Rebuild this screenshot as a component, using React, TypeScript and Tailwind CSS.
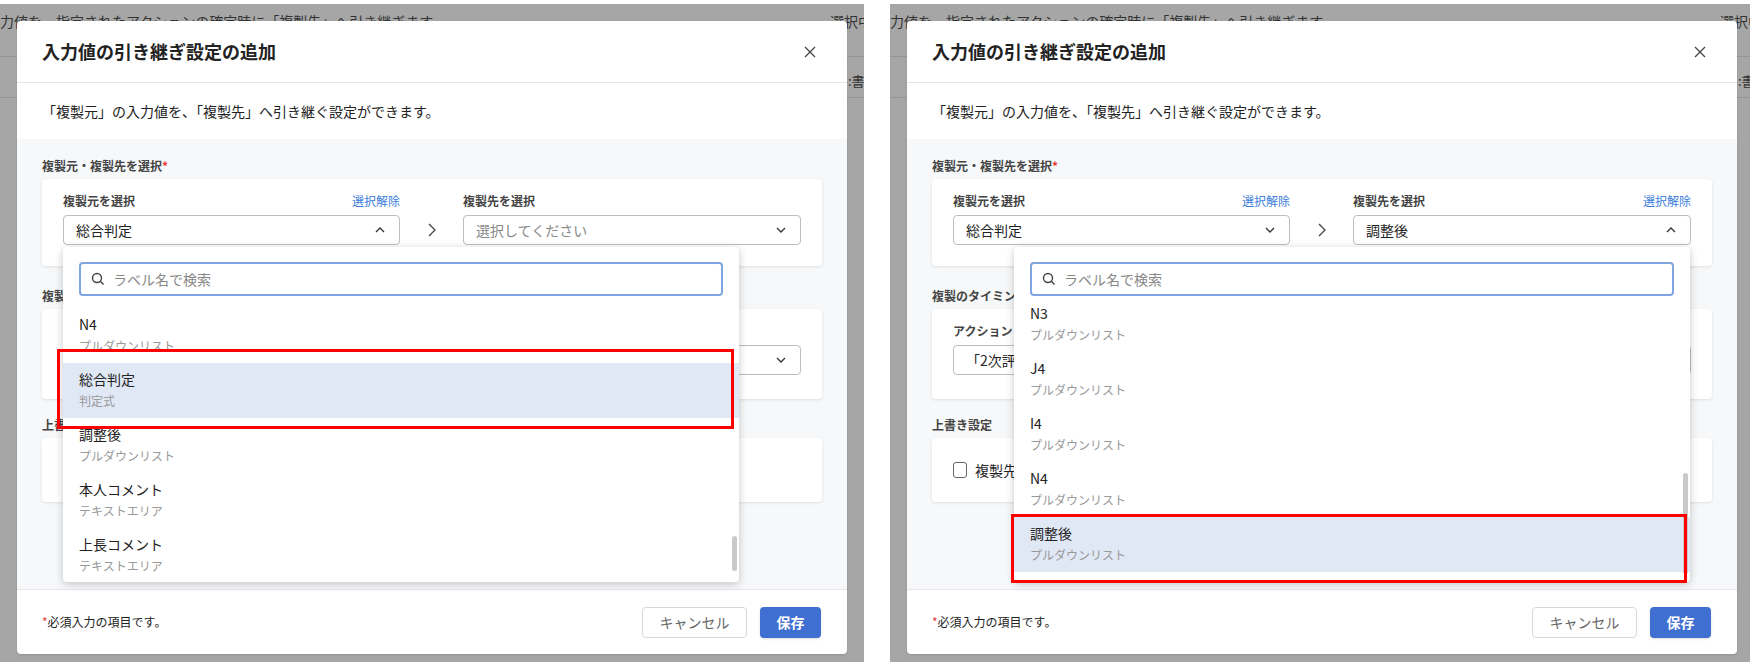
import React from "react";

const font = { fontFamily: '"Noto Sans CJK JP", "Noto Sans", sans-serif' };

const Chevron = ({ up }: { up?: boolean }) => (
  <svg width="14" height="14" viewBox="0 0 14 14" fill="none" stroke="#333" strokeWidth="1.3">
    {up ? <path d="M3 9l4-4 4 4" /> : <path d="M3 5l4 4 4-4" />}
  </svg>
);

const Select = ({ text, placeholder, up }: { text: string; placeholder?: boolean; up?: boolean }) => (
  <div className="h-[30px] border border-[#b9bdc4] rounded-[4px] bg-white flex items-center justify-between px-[12px]">
    <span className={`text-[14px] ${placeholder ? "text-[#888]" : "text-[#222]"}`}>{text}</span>
    <Chevron up={up} />
  </div>
);

type Item = { t: string; s: string; hl?: boolean };

const Dropdown = ({ left, items, offset, bar }: { left: number; items: Item[]; offset: number; bar: [number, number] }) => (
  <div
    className="absolute top-[243px] w-[676px] h-[335px] bg-white rounded-[4px] shadow-[0_2px_8px_rgba(0,0,0,0.22)] overflow-hidden"
    style={{ left }}
  >
    <div className="px-[16px] pt-[15px]">
      <div className="h-[34px] border-2 border-[#7fa6e0] rounded-[4px] flex items-center px-[10px] gap-[8px]">
        <svg width="14" height="14" viewBox="0 0 14 14" fill="none" stroke="#444" strokeWidth="1.4">
          <circle cx="6" cy="6" r="4.5" />
          <path d="M9.3 9.3l3.2 3.2" />
        </svg>
        <span className="text-[14px] text-[#888]">ラベル名で検索</span>
      </div>
    </div>
    <div className="h-[281px] overflow-hidden mt-[5px]">
      <div style={{ marginTop: offset }}>
        {items.map((it, i) => (
          <div key={i} className={`h-[55px] pl-[16px] pt-[6px] ${it.hl ? "bg-[#e0e7f5]" : ""}`}>
            <div className="text-[14px] text-[#222] leading-[20px]">{it.t}</div>
            <div className="text-[12px] text-[#999] leading-[16px] mt-[4px]">{it.s}</div>
          </div>
        ))}
      </div>
    </div>
    <div className="absolute right-[2px] w-[5px] rounded-full bg-[#c9c9c9]" style={{ top: bar[0], height: bar[1] }} />
  </div>
);

const Panel = ({ right }: { right?: boolean }) => (
  <div className={`relative h-[658px] mt-[4px] bg-[#a6a6a6] overflow-hidden ${right ? "w-[860px]" : "w-[864px]"}`}>
    <div className="absolute top-[7px] left-0 text-[14px] text-[#333] whitespace-nowrap">力値を、指定されたアクションの確定時に「複製先」へ引き継ぎます。</div>
    <div className="absolute top-[7px] left-[830px] text-[14px] text-[#333] whitespace-nowrap">選択中</div>
    <div className="absolute top-[67px] left-[848px] text-[13px] text-[#333] whitespace-nowrap">:書</div>
    <div className="absolute top-[52px] left-0 right-0 h-px bg-[#959595]" />
    <div className="absolute top-[93px] left-0 right-0 h-px bg-[#959595]" />

    <div className="absolute left-[17px] top-[17px] w-[830px] bg-white rounded-[4px] flex flex-col shadow">
      <div className="h-[62px] flex items-center justify-between pl-[25px] pr-[30px] border-b border-[#e6e7ea]">
        <span className="text-[18px] font-bold text-[#222]">入力値の引き継ぎ設定の追加</span>
        <svg width="14" height="14" viewBox="0 0 14 14" stroke="#444" strokeWidth="1.3">
          <path d="M2 2l10 10M12 2L2 12" />
        </svg>
      </div>
      <div className="h-[56px] flex items-center px-[25px] text-[14px] text-[#222]">
        「複製元」の入力値を、「複製先」へ引き継ぐ設定ができます。
      </div>
      <div className="h-[450px] bg-[#f7f8fa] px-[25px] pt-[19px]">
        <div className="text-[12px] font-semibold text-[#444] leading-[16px]">
          複製元・複製先を選択<span className="text-[#e53935]">*</span>
        </div>
        <div className="mt-[5px] bg-white rounded-[4px] shadow-[0_1px_3px_rgba(0,0,0,0.1)] px-[21px] pt-[14px] pb-[21px] flex items-end">
          <div className="w-[337px]">
            <div className="flex justify-between text-[12px] mb-[6px] leading-[16px]">
              <span className="font-semibold text-[#444]">複製元を選択</span>
              <span className="text-[#3b7ddd]">選択解除</span>
            </div>
            <Select text="総合判定" up={!right} />
          </div>
          <div className="w-[63px] h-[30px] flex items-center justify-center">
            <svg width="12" height="16" viewBox="0 0 12 16" fill="none" stroke="#444" strokeWidth="1.3">
              <path d="M3 2l6 6-6 6" />
            </svg>
          </div>
          <div className="w-[338px]">
            <div className="flex justify-between text-[12px] mb-[6px] leading-[16px]">
              <span className="font-semibold text-[#444]">複製先を選択</span>
              {right && <span className="text-[#3b7ddd]">選択解除</span>}
            </div>
            {right ? <Select text="調整後" up /> : <Select text="選択してください" placeholder />}
          </div>
        </div>
        <div className="mt-[22px] text-[12px] font-semibold text-[#444] leading-[16px]">複製のタイミング</div>
        <div className="mt-[5px] h-[90px] bg-white rounded-[4px] shadow-[0_1px_3px_rgba(0,0,0,0.1)] px-[21px] pt-[14px]">
          <div className="text-[12px] font-semibold text-[#444] leading-[16px] mb-[6px]">アクション</div>
          <Select text="「2次評価」の確定時" />
        </div>
        <div className="mt-[18px] text-[12px] font-semibold text-[#444] leading-[16px]">上書き設定</div>
        <div className="mt-[5px] h-[64px] bg-white rounded-[4px] shadow-[0_1px_3px_rgba(0,0,0,0.1)] px-[21px] flex items-center gap-[8px]">
          <div className="w-[14px] h-[16px] border border-[#666] rounded-[3px]" />
          <span className="text-[14px] text-[#222]">複製先の値を上書きする</span>
        </div>
      </div>
      <div className="h-[65px] border-t border-[#e6e7ea] flex items-center justify-between pl-[25px] pr-[26px]">
        <span className="text-[12px] text-[#222]"><span className="text-[#e53935]">*</span>必須入力の項目です。</span>
        <div className="flex gap-[13px]">
          <div className="w-[105px] h-[31px] border border-[#d5d8dd] rounded-[4px] bg-white flex items-center justify-center text-[14px] text-[#666]">キャンセル</div>
          <div className="w-[61px] h-[31px] rounded-[4px] bg-[#3f6fd0] flex items-center justify-center text-[14px] font-bold text-white shadow">保存</div>
        </div>
      </div>
    </div>

    {right ? (
      <>
        <Dropdown
          left={124}
          offset={-4}
          bar={[226, 101]}
          items={[
            { t: "N3", s: "プルダウンリスト" },
            { t: "J4", s: "プルダウンリスト" },
            { t: "I4", s: "プルダウンリスト" },
            { t: "N4", s: "プルダウンリスト" },
            { t: "調整後", s: "プルダウンリスト", hl: true },
          ]}
        />
        <div className="absolute left-[121px] top-[510px] w-[676px] h-[69px] border-[3px] border-[#ff0000]" />
      </>
    ) : (
      <>
        <Dropdown
          left={63}
          offset={7}
          bar={[289, 35]}
          items={[
            { t: "N4", s: "プルダウンリスト" },
            { t: "総合判定", s: "判定式", hl: true },
            { t: "調整後", s: "プルダウンリスト" },
            { t: "本人コメント", s: "テキストエリア" },
            { t: "上長コメント", s: "テキストエリア" },
          ]}
        />
        <div className="absolute left-[57px] top-[345px] w-[677px] h-[80px] border-[3px] border-[#ff0000]" />
      </>
    )}
  </div>
);

export default function App() {
  return (
    <div className="w-[1750px] h-[662px] bg-white flex gap-[26px] overflow-hidden" style={font}>
      <Panel />
      <Panel right />
    </div>
  );
}
